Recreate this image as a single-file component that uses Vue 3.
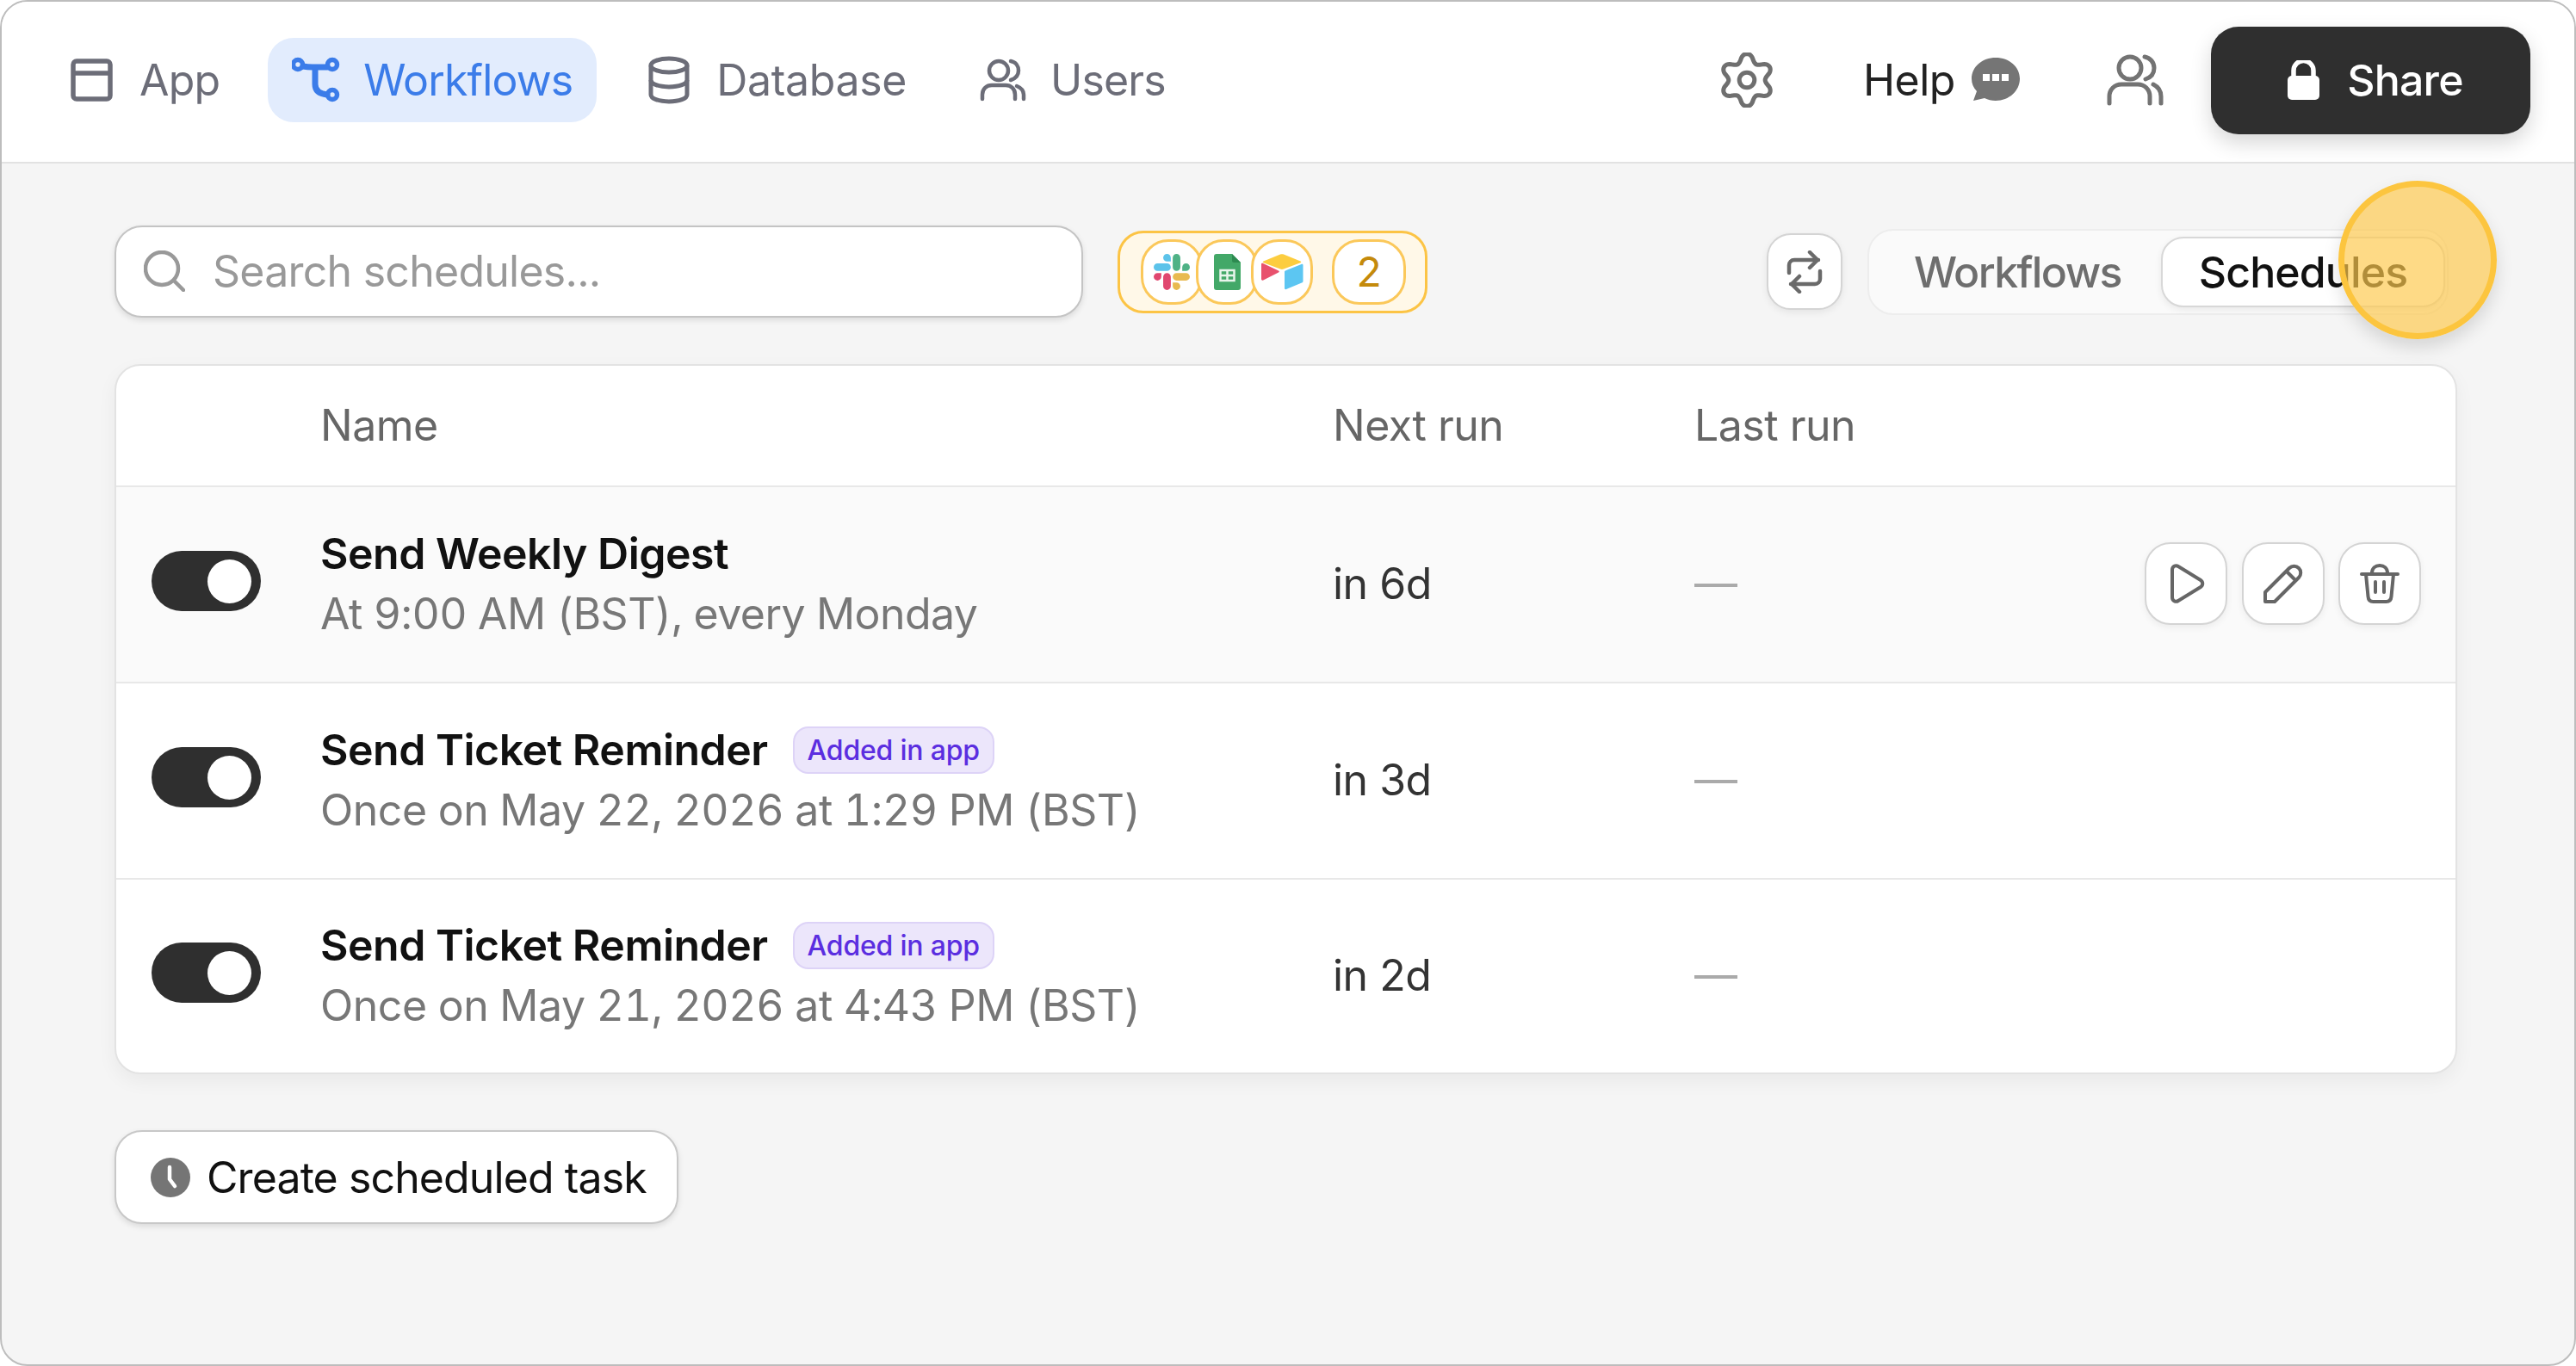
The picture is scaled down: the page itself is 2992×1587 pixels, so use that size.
<script setup>
const gearPath = (() => {
  const pts = []
  for (let i = 0; i < 144; i++) {
    const a = (i / 144) * Math.PI * 2
    const c = Math.cos(6 * (a - Math.PI / 2))
    const r = 9.7 + 1.75 * Math.sign(c) * Math.pow(Math.abs(c), 0.8)
    pts.push((12 + r * Math.cos(a)).toFixed(2) + ' ' + (12 + r * Math.sin(a)).toFixed(2))
  }
  return 'M' + pts.join('L') + 'Z'
})()

const rows = [
  { id: 1, title: 'Send Weekly Digest', sub: 'At 9:00 AM (BST), every Monday', next: 'in 6d', badge: false, actions: true },
  { id: 2, title: 'Send Ticket Reminder', sub: 'Once on May 22, 2026 at 1:29 PM (BST)', next: 'in 3d', badge: true, actions: false },
  { id: 3, title: 'Send Ticket Reminder', sub: 'Once on May 21, 2026 at 4:43 PM (BST)', next: 'in 2d', badge: true, actions: false }
]
</script>

<template>
  <div class="window">
    <header class="topbar">
      <nav class="tabs">
        <div class="tab">
          <svg class="tab-icon" viewBox="0 0 56 56" fill="none" stroke="#6c6d78" stroke-width="5.5"><rect x="6" y="6" width="43" height="44" rx="4"/><path d="M6 20h43"/></svg>
          <span>App</span>
        </div>
        <div class="tab active">
          <svg class="tab-icon" viewBox="0 0 56 56" fill="none" stroke="#3b7ce9" stroke-width="5.5" stroke-linecap="round"><circle cx="7" cy="10" r="5.5"/><circle cx="47" cy="10" r="5.5"/><circle cx="47" cy="45" r="5.5"/><path d="M13 12c5 1 8 1 11 1h17" stroke-width="7"/><path d="M27 14v19c0 7 5 11 14 12" stroke-width="7"/></svg>
          <span>Workflows</span>
        </div>
        <div class="tab">
          <svg class="tab-icon" viewBox="0 0 56 56" fill="none" stroke="#6c6d78" stroke-width="5"><ellipse cx="28" cy="11" rx="21" ry="8"/><path d="M7 11v34c0 4.500 9 8 21 8s21-3.500 21-8V11"/><path d="M7 28c0 4.500 9 8 21 8s21-3.500 21-8"/></svg>
          <span class="wider">Database</span>
        </div>
        <div class="tab">
          <svg class="tab-icon" viewBox="0 0 56 56" fill="none" stroke="#6c6d78" stroke-width="4.500" stroke-linecap="round"><circle cx="23" cy="17" r="11"/><path d="M4 50v-5c0-7 5-11 11-11h16c6 0 11 4 11 11v5"/><path d="M37 6c6 1 9 6 9 11s-3 9-9 11"/><path d="M44 35c5 2 8 6 8 10v5"/></svg>
          <span>Users</span>
        </div>
      </nav>
      <div class="top-actions">
        <svg class="gear" viewBox="0 0 24 24" fill="none" stroke="#6f6f6f" stroke-width="1.900"><path :d="gearPath"/><circle cx="12" cy="12" r="3.300"/></svg>
        <span class="help">Help</span>
        <svg class="bubble" viewBox="0 0 58 52" fill="#757575"><path d="M29 0c15.500 0 28 10.500 28 24.500S44.500 50 29 50c-5 0-9-1-13-3L3 50l4-11C3 35 1 30 1 24.500 1 10.500 13.500 0 29 0z"/><rect x="14" y="19" width="8" height="8" fill="#fff"/><rect x="25" y="19" width="8" height="8" fill="#fff"/><rect x="36" y="19" width="8" height="8" fill="#fff"/></svg>
        <svg class="people" viewBox="0 0 66 60" fill="none" stroke="#737373" stroke-width="5" stroke-linecap="round"><circle cx="27" cy="16" r="13"/><path d="M3 57v-8c0-8 6-14 14-14h19c8 0 14 6 14 14v8"/><path d="M44 3c6 1 11 6 11 13s-4 11-10 13"/><path d="M54 35c6 3 9 8 9 14v8"/></svg>
        <button class="share">
          <svg class="lock" viewBox="0 0 39 46" fill="#fff"><path d="M8 20v-8a11.500 11.500 0 0 1 23 0v8" fill="none" stroke="#fff" stroke-width="5.500"/><rect x="1" y="18" width="37" height="28" rx="5"/></svg>
          <span>Share</span>
        </button>
      </div>
    </header>

    <main class="content">
      <div class="toolbar">
        <div class="search">
          <svg class="search-icon" viewBox="0 0 48 48" fill="none" stroke="#999" stroke-width="4.500" stroke-linecap="round"><circle cx="21" cy="21" r="19"/><path d="M35 35l11 11"/></svg>
          <span>Search schedules...</span>
        </div>
        <div class="chips">
          <div class="chip">
            <svg class="logo-slack" viewBox="0 0 122.800 122.800"><path fill="#e0476f" d="M25.800 77.600c0 7.100-5.800 12.900-12.900 12.900S0 84.700 0 77.600s5.800-12.900 12.900-12.900h12.900v12.900zM32.300 77.600c0-7.100 5.800-12.900 12.900-12.900s12.900 5.800 12.900 12.900v32.300c0 7.100-5.800 12.900-12.900 12.900s-12.900-5.800-12.900-12.900V77.600z"/><path fill="#5cc3ea" d="M45.200 25.800c-7.100 0-12.900-5.800-12.900-12.900S38.100 0 45.200 0s12.900 5.800 12.900 12.900v12.900H45.200zM45.200 32.300c7.100 0 12.900 5.800 12.900 12.900s-5.800 12.900-12.900 12.900H12.900C5.800 58.100 0 52.300 0 45.200s5.800-12.900 12.900-12.900h32.300z"/><path fill="#4fb286" d="M97 45.200c0-7.100 5.800-12.900 12.900-12.900s12.900 5.800 12.900 12.900-5.800 12.900-12.900 12.900H97V45.200zM90.500 45.200c0 7.100-5.800 12.900-12.900 12.900s-12.900-5.800-12.900-12.900V12.900C64.700 5.800 70.500 0 77.600 0s12.900 5.800 12.900 12.900v32.300z"/><path fill="#e8ba50" d="M77.600 97c7.100 0 12.900 5.800 12.900 12.900s-5.800 12.900-12.900 12.900-12.900-5.800-12.900-12.900V97h12.900zM77.600 90.500c-7.100 0-12.900-5.800-12.900-12.900s5.800-12.900 12.900-12.900h32.300c7.100 0 12.900 5.800 12.900 12.900s-5.800 12.900-12.900 12.900H77.600z"/></svg>
          </div>
          <div class="chip overlap">
            <svg class="logo-sheets" viewBox="0 0 31 42"><path fill="#43a868" d="M3 0h18l10 10v29a3 3 0 0 1-3 3H3a3 3 0 0 1-3-3V3a3 3 0 0 1 3-3z"/><path fill="#2d8a50" d="M21 0l10 10H23a2 2 0 0 1-2-2z"/><path fill="none" stroke="#e8f5ec" stroke-width="2.500" d="M7.500 19h16v12h-16zM7.500 25h16M15.500 19v12"/></svg>
          </div>
          <div class="chip overlap">
            <svg class="logo-airtable" viewBox="0 0 50 42"><path fill="#fccd3f" d="M23 .5 3.500 8.500c-1 .4-1 1.300 0 1.700L23 17.500c1.300.5 2.700.5 4 0l19.500-7.300c1-.4 1-1.300 0-1.700L27 .5c-1.300-.5-2.700-.5-4 0z"/><path fill="#5cc6f2" d="M28 21v19c0 1 1 1.500 2 1l18-7.500c1-.4 1.500-1 1.500-2V13c0-1-1-1.500-2-1L30 19c-1.300.5-2 1-2 2z"/><path fill="#e8516d" d="M1 12v17c0 1.500 1 2 2.300 1.500L21 21.500c1-.5 1-1.500 0-2L3 11c-1-.5-2 0-2 1z"/></svg>
          </div>
          <div class="chip count">2</div>
        </div>
        <div class="toolbar-right">
          <button class="sync">
            <svg viewBox="0 0 42 50" fill="none" stroke="#6a6a6a" stroke-width="4.500" stroke-linecap="round" stroke-linejoin="round"><path d="M3 26v-9a6 6 0 0 1 6-6h28"/><path d="M27 2l9 9-9 9"/><path d="M39 24v9a6 6 0 0 1-6 6H5"/><path d="M15 30l-9 9 9 9"/></svg>
          </button>
          <div class="segment">
            <span class="seg-item">Workflows</span>
            <span class="seg-item seg-active">Schedules</span>
          </div>
        </div>
        <div class="pointer"></div>
      </div>

      <section class="table">
        <div class="row head">
          <span></span>
          <span>Name</span>
          <span>Next run</span>
          <span>Last run</span>
          <span></span>
        </div>
        <div v-for="r in rows" :key="r.id" class="row" :class="{ hovered: r.actions }">
          <span class="toggle"><i class="knob"></i></span>
          <div class="name">
            <div class="title">
              <span>{{ r.title }}</span>
              <span v-if="r.badge" class="badge">Added in app</span>
            </div>
            <div class="sub" :class="{ long: r.badge }">{{ r.sub }}</div>
          </div>
          <span class="next">{{ r.next }}</span>
          <span class="dash">—</span>
          <div class="actions">
            <template v-if="r.actions">
              <button class="act"><svg viewBox="0 0 48 48" fill="none" stroke="#666" stroke-width="4" stroke-linejoin="round"><path d="M8 8c0-4 4-6 7-4l26 16c3 2 3 6 0 8L15 44c-3 2-7 0-7-4z"/></svg></button>
              <button class="act"><svg viewBox="0 0 48 48" fill="none" stroke="#666" stroke-width="4" stroke-linejoin="round"><path d="M3 45V34L31 6c3-3 8-3 11 0s3 8 0 11L14 45z"/><path d="M28 10l10 10"/></svg></button>
              <button class="act"><svg viewBox="0 0 48 48" fill="none" stroke="#666" stroke-width="4" stroke-linecap="round" stroke-linejoin="round"><path d="M3 13h42"/><path d="M15 12c0-6 4-9 9-9s9 3 9 9"/><path d="M8 13l2.500 26c.3 4 2.500 6 6 6h15c3.500 0 5.700-2 6-6L40 13"/><path d="M19 22v12M29 22v12"/></svg></button>
            </template>
          </div>
        </div>
      </section>

      <button class="create">
        <svg class="clock" viewBox="0 0 46 46"><circle cx="23" cy="23" r="23" fill="#757575"/><path d="M22 11v14l6 8" fill="none" stroke="#fff" stroke-width="4.500" stroke-linecap="round" stroke-linejoin="round"/></svg>
        <span>Create scheduled task</span>
      </button>
    </main>
  </div>
</template>

<style>
html, body { margin: 0; background: #fff; }
</style>

<style scoped>
.window {
  width: 2992px;
  height: 1587px;
  box-sizing: border-box;
  border: 2px solid #bdbdbd;
  border-radius: 32px;
  background: #f5f5f5;
  overflow: hidden;
  font-family: Inter, "Liberation Sans", sans-serif;
  font-size: 50px;
  letter-spacing: -0.5px;
  color: #111;
}
button { font-family: inherit; font-size: inherit; letter-spacing: inherit; cursor: default; }

.topbar {
  height: 188px;
  box-sizing: border-box;
  background: #fff;
  border-bottom: 2px solid #e2e2e2;
  display: flex;
  align-items: center;
  padding: 0 51px 4px 49px;
}
.tabs { display: flex; align-items: center; gap: 28px; letter-spacing: -0.85px; }
.tab {
  height: 98px;
  box-sizing: border-box;
  padding: 0 28px;
  display: flex;
  align-items: center;
  gap: 27px;
  border-radius: 30px;
  color: #6c6d78;
}
.tab.active { background: #e2ecfd; color: #3b7ce9; gap: 27px; }
.wider { letter-spacing: -0.35px; }
.tab-icon { width: 56px; height: 56px; flex: none; }

.top-actions { margin-left: auto; display: flex; align-items: center; }
.gear { width: 64px; height: 64px; margin-right: 103px; }
.help { color: #222; margin-right: 18px; letter-spacing: -0.5px; }
.bubble { width: 58px; height: 52px; margin-right: 100px; }
.people { width: 66px; height: 60px; margin-right: 55px; }
.share {
  height: 125px;
  width: 371px;
  padding: 0 0 0 10px;
  border: none;
  border-radius: 32px;
  background: #2f2f2f;
  color: #fff;
  font-weight: 500;
  letter-spacing: -0.8px;
  display: flex;
  align-items: center;
  justify-content: center;
  gap: 31px;
  box-shadow: 0 10px 24px rgba(0, 0, 0, 0.16);
}
.lock { width: 39px; height: 46px; }

.content { padding: 72px 136px 0 131px; }
.toolbar { display: flex; align-items: center; height: 107px; position: relative; }
.search {
  width: 1125px;
  height: 107px;
  box-sizing: border-box;
  background: #fff;
  border: 2px solid #c4c4c4;
  border-radius: 32px;
  box-shadow: 0 3px 7px rgba(0, 0, 0, 0.11);
  display: flex;
  align-items: center;
  gap: 32px;
  padding: 0 0 2px 32px;
  color: #999;
  letter-spacing: -0.75px;
}
.search-icon { width: 48px; height: 48px; flex: none; }
.chips {
  margin-left: 40px;
  height: 96px;
  width: 360px;
  box-sizing: border-box;
  border: 3px solid #fcc445;
  border-radius: 30px;
  background: #fff8e8;
  display: flex;
  align-items: center;
  padding-left: 24px;
}
.chip {
  width: 72px;
  height: 76px;
  flex: none;
  box-sizing: border-box;
  border: 3px solid #fbc85a;
  border-radius: 32px;
  background: #fff;
  display: flex;
  align-items: center;
  justify-content: center;
  position: relative;
}
.chip.overlap { margin-left: -8px; }
.chip.count {
  width: 86px;
  margin-left: 22px;
  color: #c48a0b;
  font-size: 48px;
}
.logo-slack { width: 42px; height: 42px; }
.logo-sheets { width: 31px; height: 42px; }
.logo-airtable { width: 50px; height: 42px; }

.toolbar-right { margin-left: auto; display: flex; align-items: center; gap: 29px; padding-right: 10px; }
.sync {
  width: 88px;
  height: 89px;
  padding: 0;
  background: #fff;
  border: 2px solid #d4d4d4;
  border-radius: 28px;
  box-shadow: 0 3px 8px rgba(0, 0, 0, 0.07);
  display: flex;
  align-items: center;
  justify-content: center;
}
.sync svg { width: 42px; height: 50px; }
.segment {
  height: 100px;
  width: 675px;
  box-sizing: border-box;
  background: #fafafa;
  border: 2px solid #ededed;
  border-radius: 30px;
  display: flex;
  align-items: center;
  justify-content: space-between;
  padding: 0 2px 0 52px;
}
.seg-item { color: #6e6e6e; font-weight: 500; letter-spacing: -1.6px; }
.seg-active {
  width: 330px;
  height: 82px;
  box-sizing: border-box;
  background: #fff;
  color: #111;
  border: 2px solid #d8d8d8;
  border-radius: 26px;
  box-shadow: 0 3px 8px rgba(0, 0, 0, 0.07);
  display: flex;
  align-items: center;
  justify-content: center;
  letter-spacing: -0.9px;
}
.pointer {
  position: absolute;
  left: 2583px;
  top: -52px;
  width: 184px;
  height: 184px;
  box-sizing: border-box;
  border-radius: 50%;
  border: 7px solid #fcc53f;
  background: rgba(253, 201, 76, 0.68);
  box-shadow: 0 10px 20px rgba(0, 0, 0, 0.13);
}

.table {
  margin-top: 54px;
  background: #fff;
  border: 2px solid #e3e3e3;
  border-radius: 30px;
  overflow: hidden;
  box-shadow: 0 8px 22px rgba(0, 0, 0, 0.05);
}
.row {
  display: grid;
  grid-template-columns: 196px 1176px 420px 1fr auto;
  align-items: center;
  height: 228px;
  box-sizing: border-box;
  padding: 0 40px 0 41px;
  border-top: 2px solid #e8e8e8;
}
.row:last-child { height: 226px; }
.row.head { height: 139px; border-top: none; color: #666; padding-bottom: 2px; }
.row.hovered { background: #fafafa; }
.toggle {
  width: 127px;
  height: 70px;
  margin-bottom: 8px;
  border-radius: 35px;
  background: #2f2f2f;
  position: relative;
  display: block;
}
.knob {
  position: absolute;
  right: 11px;
  top: 10px;
  width: 51px;
  height: 51px;
  border-radius: 50%;
  background: #fff;
}
.name { margin-bottom: 3px; }
.title { display: flex; align-items: center; font-weight: 600; line-height: 71px; color: #111; letter-spacing: -0.5px; }
.sub { line-height: 69px; color: #777; letter-spacing: -0.55px; font-variant-numeric: tabular-nums; }
.sub.long { letter-spacing: -0.45px; }
.badge {
  margin-left: 29px;
  height: 55px;
  width: 234px;
  box-sizing: border-box;
  border: 2px solid #ddd3f7;
  border-radius: 18px;
  background: #ece6fb;
  color: #5b2ee0;
  font-size: 32px;
  font-weight: 500;
  letter-spacing: -0.2px;
  display: flex;
  align-items: center;
  justify-content: center;
}
.next { color: #333; margin-bottom: 2px; }
.dash { color: #aaa; margin-bottom: 2px; }
.actions { display: flex; gap: 16.5px; margin-bottom: 2px; }
.act {
  width: 96px;
  height: 96px;
  padding: 0;
  background: #fff;
  border: 2px solid #d4d4d4;
  border-radius: 30px;
  box-shadow: 0 3px 8px rgba(0, 0, 0, 0.06);
  display: flex;
  align-items: center;
  justify-content: center;
}
.act svg { width: 48px; height: 48px; }

.create {
  margin-top: 65px;
  height: 109px;
  width: 655px;
  box-sizing: border-box;
  padding: 0 0 0 40px;
  background: #fff;
  border: 2px solid #c8c8c8;
  border-radius: 32px;
  box-shadow: 0 3px 7px rgba(0, 0, 0, 0.11);
  display: flex;
  align-items: center;
  gap: 19px;
  color: #111;
  font-weight: 400;
  letter-spacing: -0.9px;
}
.clock { width: 46px; height: 46px; flex: none; }
</style>
